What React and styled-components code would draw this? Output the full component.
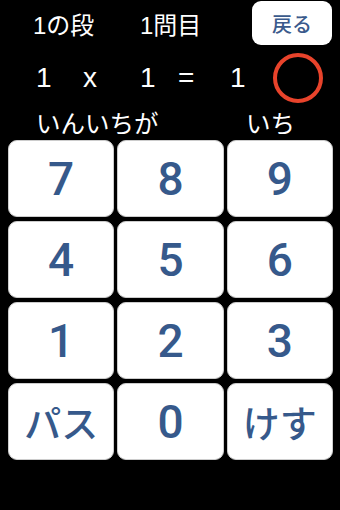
import React from 'react';
import styled, { createGlobalStyle } from 'styled-components';

const GlobalStyle = createGlobalStyle`
  html, body {
    margin: 0;
    padding: 0;
    background: #000;
  }
  body {
    font-family: "Liberation Sans", "Noto Sans CJK JP", sans-serif;
  }
`;

const Screen = styled.div`
  width: 340px;
  height: 510px;
  background: #000;
  color: #fff;
  box-sizing: border-box;
  padding: 1px 7px 0 8px;
`;

const TopRow = styled.div`
  display: flex;
  align-items: center;
  height: 44px;
`;

const Label = styled.span`
  font-size: 24px;
  width: ${(p) => p.w}px;
  padding-left: ${(p) => p.pl || 0}px;
  box-sizing: border-box;
  white-space: nowrap;
`;

const BackButton = styled.button`
  margin-left: auto;
  margin-right: 1px;
  width: 80px;
  height: 44px;
  border: none;
  border-radius: 9px;
  background: #fff;
  color: #3a5a8c;
  font-family: "Noto Sans CJK JP", sans-serif;
  font-size: 20px;
  font-weight: 500;
  padding: 0;
`;

const EqRow = styled.div`
  display: flex;
  align-items: center;
  height: 54px;
  margin-top: 6px;
`;

const EqCell = styled.span`
  font-size: 28px;
  width: ${(p) => p.w}px;
  flex: none;
`;

const Circle = styled.div`
  width: 42px;
  height: 42px;
  border: 4px solid #e8432b;
  border-radius: 50%;
  margin-left: 29px;
  flex: none;
`;

const ReadRow = styled.div`
  display: flex;
  align-items: center;
  height: 32px;
  margin-top: 2px;
  font-family: "Noto Sans CJK JP", sans-serif;
  font-size: 24.5px;
  line-height: 1;
`;

const Read = styled.span`
  width: ${(p) => p.w}px;
  padding-left: ${(p) => p.pl || 0}px;
  box-sizing: border-box;
  white-space: nowrap;
`;

const Pad = styled.div`
  display: grid;
  grid-template-columns: repeat(3, 1fr);
  grid-auto-rows: 77px;
  column-gap: 3px;
  row-gap: 4px;
  margin-top: 1px;
  width: 325px;
`;

const Key = styled.button`
  background: #fff;
  border: 1px solid #ccc;
  border-radius: 9px;
  color: #36598b;
  font-family: ${(p) => (p.jp ? '"Noto Sans CJK JP", sans-serif' : 'Roboto, "Liberation Sans", sans-serif')};
  font-size: ${(p) => (p.jp ? 37 : 46)}px;
  font-weight: 500;
  padding: 0;
  display: flex;
  align-items: center;
  justify-content: center;
`;

const keys = ['7', '8', '9', '4', '5', '6', '1', '2', '3', 'パス', '0', 'けす'];

export default function App() {
  return (
    <Screen>
      <GlobalStyle />
      <TopRow>
        <Label w={132} pl={25}>1の段</Label>
        <Label w={100}>1問目</Label>
        <BackButton>戻る</BackButton>
      </TopRow>
      <EqRow>
        <EqCell w={28} />
        <EqCell w={47}>1</EqCell>
        <EqCell w={57}>x</EqCell>
        <EqCell w={38}>1</EqCell>
        <EqCell w={52}>=</EqCell>
        <EqCell w={14}>1</EqCell>
        <Circle />
      </EqRow>
      <ReadRow>
        <Read w={238} pl={28}>いんいちが</Read>
        <Read w={60}>いち</Read>
      </ReadRow>
      <Pad>
        {keys.map((k) => (
          <Key key={k} jp={k.length > 1}>{k}</Key>
        ))}
      </Pad>
    </Screen>
  );
}
